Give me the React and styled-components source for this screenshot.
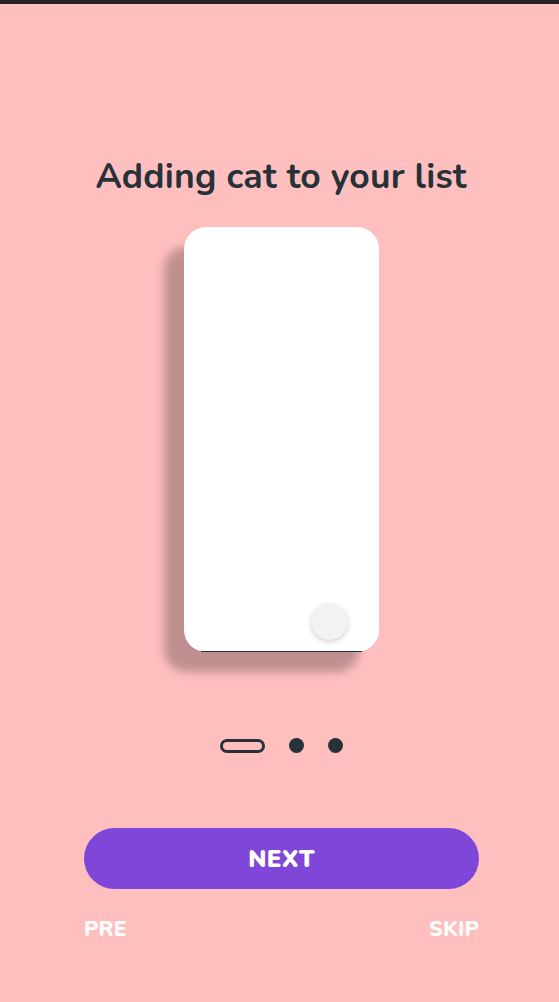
import React from "react";
import styled, { createGlobalStyle } from "styled-components";

const GlobalStyle = createGlobalStyle`
  html, body {
    margin: 0;
    padding: 0;
    background: #ffbfbf;
    font-family: "Nunito", Lato, "Open Sans", sans-serif;
  }
`;

const Page = styled.div`
  min-height: 1002px;
  display: flex;
  flex-direction: column;
  align-items: center;
  border-top: 4px solid #232323;
  box-sizing: border-box;
`;

const Title = styled.h1`
  margin: 153px 0 0 3px;
  font-size: 35.5px;
  line-height: 40px;
  font-weight: 700;
  color: #263238;
  letter-spacing: 0.2px;
`;

const Phone = styled.div`
  position: relative;
  margin-top: 30px;
  margin-left: 4px;
  width: 195px;
  height: 425px;
  box-sizing: border-box;
  background: #fff;
  border-radius: 22px;
  box-shadow: -20px 20px 10px rgba(0, 0, 0, 0.25);
  display: flex;
  flex-direction: column;
  justify-content: flex-end;
  align-items: flex-end;
  padding: 0 31px 12px 0;

  &::after {
    content: "";
    position: absolute;
    left: 17px;
    right: 17px;
    bottom: 0;
    height: 1px;
    background: #263238;
  }
`;

const RoundButton = styled.div`
  width: 37px;
  height: 37px;
  border-radius: 50%;
  background: #f2f2f2;
  box-shadow: 0 2px 5px rgba(0, 0, 0, 0.18);
`;

const Dots = styled.div`
  margin-top: 86px;
  display: flex;
  align-items: center;
  gap: 24px;
  margin-left: 4px;
`;

const Dot = styled.span`
  display: block;
  box-sizing: border-box;
  width: ${(p) => (p.active ? "45px" : "15px")};
  height: ${(p) => (p.active ? "14px" : "15px")};
  border-radius: 10px;
  background: ${(p) => (p.active ? "transparent" : "#263238")};
  border: ${(p) => (p.active ? "3px solid #263238" : "none")};
`;

const NextButton = styled.button`
  margin-top: 75px;
  margin-left: 4px;
  width: 395px;
  height: 61px;
  border: none;
  border-radius: 31px;
  background: #7e47d8;
  color: #fff;
  font-family: inherit;
  font-size: 24px;
  font-weight: 900;
  letter-spacing: 0.3px;
  cursor: pointer;
`;

const Footer = styled.div`
  width: 395px;
  margin-left: 4px;
  margin-top: 25px;
  display: flex;
  justify-content: space-between;
`;

const TextButton = styled.span`
  color: #fff;
  font-size: 21.5px;
  font-weight: 800;
  letter-spacing: 0.2px;
  cursor: pointer;
`;

export default function App() {
  return (
    <>
      <GlobalStyle />
      <Page>
        <Title>Adding cat to your list</Title>
        <Phone>
          <RoundButton />
        </Phone>
        <Dots>
          <Dot active />
          <Dot />
          <Dot />
        </Dots>
        <NextButton>NEXT</NextButton>
        <Footer>
          <TextButton>PRE</TextButton>
          <TextButton>SKIP</TextButton>
        </Footer>
      </Page>
    </>
  );
}
